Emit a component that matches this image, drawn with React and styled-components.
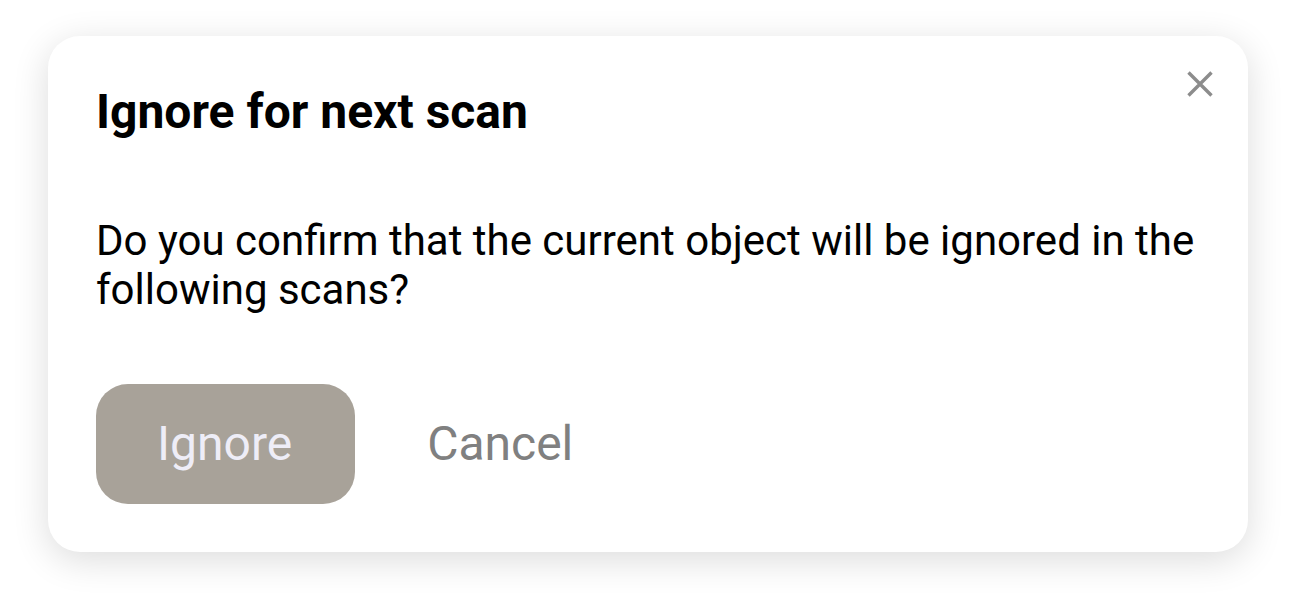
import React from "react";
import styled, { createGlobalStyle } from "styled-components";

const Global = createGlobalStyle`
  html, body { margin: 0; padding: 0; background: #ffffff; }
  body { font-family: Roboto, "Noto Sans", "Liberation Sans", sans-serif; }
  * { box-sizing: border-box; }
`;

const Page = styled.div`
  width: 1296px;
  height: 612px;
  padding: 36px 48px 0 48px;
`;

const Dialog = styled.div`
  position: relative;
  width: 1200px;
  height: 516px;
  background: #ffffff;
  border-radius: 32px;
  box-shadow: 0 8px 36px rgba(0, 0, 0, 0.14);
  padding: 48px;
  display: flex;
  flex-direction: column;
`;

const Title = styled.h2`
  margin: 0;
  font-size: 48px;
  font-weight: 700;
  color: #000000;
  line-height: 56px;
`;

const Body = styled.p`
  margin: 76px 0 0 0;
  font-size: 42px;
  line-height: 49px;
  color: #000000;
  font-weight: 400;
`;

const Actions = styled.div`
  margin-top: auto;
  display: flex;
  align-items: center;
  gap: 48px;
`;

const Button = styled.button`
  font-family: inherit;
  font-size: 48px;
  line-height: 56px;
  border: none;
  cursor: pointer;
  height: 120px;
  border-radius: 32px;
  padding: ${(p) => (p.$primary ? "0 63px 0 61px" : "0 24px")};
  background: ${(p) => (p.$primary ? "#a8a299" : "transparent")};
  color: ${(p) => (p.$primary ? "#eeedf7" : "#808080")};
`;

const Close = styled.button`
  position: absolute;
  top: 32px;
  right: 32px;
  width: 32px;
  height: 32px;
  padding: 0;
  border: none;
  background: transparent;
  display: flex;
  align-items: center;
  justify-content: center;
  cursor: pointer;
`;

export default function App() {
  return (
    <>
      <Global />
      <Page>
        <Dialog>
          <Close aria-label="Close">
            <svg width="32" height="32" viewBox="0 0 32 32">
              <path d="M4.5 4.5 L27.5 27.5 M27.5 4.5 L4.5 27.5" stroke="#8c8c8c" strokeWidth="3.4" strokeLinecap="butt" fill="none" />
            </svg>
          </Close>
          <Title>Ignore for next scan</Title>
          <Body>
            Do you confirm that the current object will be ignored in the following scans?
          </Body>
          <Actions>
            <Button $primary>Ignore</Button>
            <Button>Cancel</Button>
          </Actions>
        </Dialog>
      </Page>
    </>
  );
}
